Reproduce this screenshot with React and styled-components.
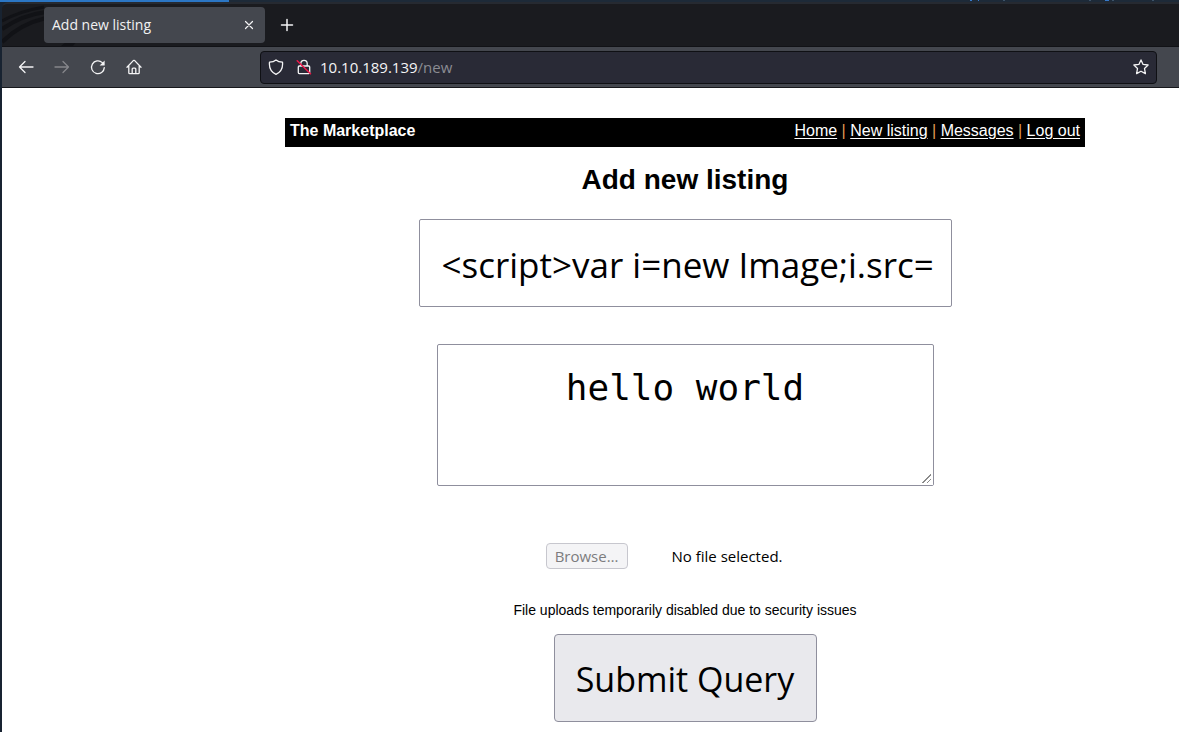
import React from "react";
import styled, { createGlobalStyle } from "styled-components";

const GlobalStyle = createGlobalStyle`
  *, *::before, *::after { box-sizing: border-box; }
  body { margin: 0; background: #17202c; overflow-x: hidden; }
`;

const uiFont = `"Open Sans", "Noto Sans", sans-serif`;
const pageFont = `"Liberation Sans", Arial, sans-serif`;

const Desktop = styled.div`
  min-height: 100vh;
  padding-left: 2px;
  display: flex;
  flex-direction: column;
  background: #182331;
`;

const DesktopStrip = styled.div`
  height: 2px;
  margin-left: -2px;
  display: flex;
  justify-content: space-between;
  background: linear-gradient(to right, #2b76c4 229px, #1d2a38 229px);
`;

const Specks = styled.svg`
  margin-left: auto;
  display: block;
`;

const TabStrip = styled.div`
  height: 45px;
  padding: 3px 0 0 42px;
  border-top: 2px solid #262a31;
  border-bottom: 1px solid #111216;
  border-top-left-radius: 6px;
  display: flex;
  align-items: flex-start;
  background: #1a1b1f;
  position: relative;
`;

const ThemeArt = styled.svg`
  position: absolute;
  left: 0;
  top: 0;
`;

const Tab = styled.div`
  width: 221px;
  height: 36px;
  padding: 0 8px;
  border-radius: 4px;
  display: flex;
  align-items: center;
  justify-content: space-between;
  background: #44474e;
  color: #f2f2f2;
  font: 14px/20px ${uiFont};
  position: relative;
`;

const IconButton = styled.button`
  width: 16px;
  height: 16px;
  padding: 0;
  border: 0;
  display: grid;
  place-items: center;
  background: none;
  color: ${(p) => (p.disabled ? "#85868b" : "#f4f4f5")};
  svg { display: block; }
`;

const NewTab = styled.div`
  height: 36px;
  padding-left: 14px;
  display: flex;
  align-items: center;
`;

const Toolbar = styled.div`
  height: 41px;
  padding: 0 22px 0 16px;
  border-bottom: 1px solid #17181c;
  display: flex;
  align-items: center;
  background: #44474e;
`;

const NavButtons = styled.nav`
  width: 242px;
  flex: none;
  display: flex;
  gap: 20px;
`;

const AddressBar = styled.div`
  flex: 1;
  min-width: 0;
  height: 33px;
  padding: 0 7px;
  border: 1px solid #0f1014;
  border-radius: 4px;
  display: flex;
  align-items: center;
  gap: 12px;
  background: #292a36;
`;

const Url = styled.div`
  flex: 1;
  margin-left: -4px;
  color: #f4f4f5;
  font: 15px/20px ${uiFont};
  span { color: #8b8c93; }
`;

const Page = styled.main`
  flex: 1;
  padding: 30px 94px 10px 283px;
  background: #fff;
  color: #000;
  font: 16px/18px ${pageFont};
`;

const SiteBar = styled.header`
  height: 29px;
  padding: 4px 5px;
  display: flex;
  justify-content: space-between;
  background: #000;
  color: #fff;
`;

const SiteLinks = styled.nav`
  a { color: #fff; text-underline-offset: 2px; }
  span { color: #e39a55; }
`;

const Heading = styled.h1`
  margin: 16px 0 23px;
  text-align: center;
  font: bold 28px/33px ${pageFont};
`;

const Form = styled.form`
  display: flex;
  flex-direction: column;
  align-items: center;
`;

const TitleInput = styled.input`
  width: 533px;
  max-width: 100%;
  height: 88px;
  padding: 2px 16px 0 22px;
  border: 1px solid #8f8f9d;
  border-radius: 2px;
  background: #fff;
  color: #000;
  font: 35px/44px ${uiFont};
`;

const Description = styled.textarea`
  width: 497px;
  max-width: 100%;
  height: 142px;
  margin-top: 37px;
  padding: 21px 20px;
  border: 1px solid #8f8f9d;
  border-radius: 2px;
  resize: both;
  overflow: hidden;
  background: #fff;
  color: #000;
  text-align: center;
  font: 36px/44px "DejaVu Sans Mono", monospace;

  &::-webkit-resizer {
    background:
      linear-gradient(135deg, #fff 54%, transparent 54%),
      repeating-linear-gradient(135deg, #8a8a8a 0 1px, #fff 1px 3px);
    border: solid #fff;
    border-width: 0 2px 2px 0;
  }
`;

const FileRow = styled.div`
  width: 279px;
  margin-top: 57px;
  display: flex;
  align-items: center;
  gap: 44px;
  font: 15px/20px ${uiFont};
`;

const BrowseButton = styled.button`
  width: 82px;
  height: 26px;
  padding: 0;
  border: 1px solid #c7c7ce;
  border-radius: 4px;
  background: #f4f4f6;
  color: #7c7c7e;
  font: inherit;
`;

const Note = styled.p`
  margin: 32px 0 15px;
  font-size: 14px;
  line-height: 18px;
`;

const Submit = styled.button`
  width: 263px;
  height: 88px;
  padding: 2px 0 0;
  border: 1px solid #8f8f9d;
  border-radius: 4px;
  background: #e9e9ed;
  color: #000;
  font: 34px/44px ${uiFont};
`;

function Icon({ size = 16, width = 1.3, children }) {
  return (
    <svg width={size} height={size} viewBox="0 0 16 16" fill="none" stroke="currentColor"
      strokeWidth={width} strokeLinecap="round" strokeLinejoin="round" aria-hidden="true">
      {children}
    </svg>
  );
}

export default function App() {
  return (
    <Desktop>
      <GlobalStyle />
      <DesktopStrip>
        <Specks width="211" height="2" aria-hidden="true">
          <path d="M2 0h2M10 0h1M137 0h4" stroke="#3779ca" strokeWidth="2" />
          <path d="M35 0h2M121 0h2M144 0h2M184 0h2" stroke="#3c5267" strokeWidth="2" />
        </Specks>
      </DesktopStrip>
      <TabStrip>
        <ThemeArt width="90" height="42" fill="none" stroke="#111216" aria-hidden="true">
          <path d="M0 17Q18 7 42 3" strokeWidth="3" />
          <path d="M0 25Q20 11 44 8M0 38Q18 20 44 14" strokeWidth="4" />
          <path d="M59 42L64 38H74L71 42Z" fill="#111216" stroke="none" />
        </ThemeArt>
        <Tab>
          <span>Add new listing</span>
          <IconButton type="button" aria-label="Close tab">
            <Icon width={1.2}><path d="M4.5 4.5l7 7m0-7l-7 7" /></Icon>
          </IconButton>
        </Tab>
        <NewTab>
          <IconButton type="button" aria-label="New tab">
            <Icon width={1.5}><path d="M8 2.5v11M2.5 8h11" /></Icon>
          </IconButton>
        </NewTab>
      </TabStrip>
      <Toolbar>
        <NavButtons>
          <IconButton type="button" aria-label="Back">
            <Icon><path d="M15 8H1.5M7 2.5L1.5 8 7 13.5" /></Icon>
          </IconButton>
          <IconButton type="button" aria-label="Forward" disabled>
            <Icon><path d="M1 8h13.5M9 2.5L14.5 8 9 13.5" /></Icon>
          </IconButton>
          <IconButton type="button" aria-label="Reload">
            <Icon>
              <path d="M14.3 8.6A6.4 6.4 0 1 1 12.3 3.6L13.6 5" />
              <path d="M14.6 1.6v5H9.6z" fill="currentColor" stroke="none" />
            </Icon>
          </IconButton>
          <IconButton type="button" aria-label="Home">
            <Icon>
              <path d="M1 8.2L7.3 1.6Q8 1 8.7 1.6L15 8.2M2.8 7v6.7q0 1 1 1h8.4q1 0 1-1V7M6.2 14.5V10q0-.9.9-.9h1.8q.9 0 .9.9v4.5" />
            </Icon>
          </IconButton>
        </NavButtons>
        <AddressBar>
          <IconButton type="button" aria-label="Tracking protection">
            <Icon><path d="M8 .9C6.4 2.3 4 3 1.5 3.1 1 8 3 13 8 15.3 13 13 15 8 14.5 3.1 12 3 9.6 2.3 8 .9z" /></Icon>
          </IconButton>
          <IconButton type="button" aria-label="Connection not secure">
            <Icon>
              <path d="M4.8 7V4.5a3.2 3.2 0 0 1 6.4 0V7M3.3 7h9.4q1 0 1 1v5.6q0 1-1 1H3.3q-1 0-1-1V8q0-1 1-1z" />
              <path d="M1.2 1.8L14.5 14.8" stroke="#ed1648" strokeWidth="1.5" />
            </Icon>
          </IconButton>
          <Url>10.10.189.139<span>/new</span></Url>
          <IconButton type="button" aria-label="Bookmark this page">
            <Icon><path d="M8 .9l2.1 4.5 5 .6-3.6 3.5.9 5.1L8 12.2l-4.4 2.4.9-5.1L.9 6l5-.6z" /></Icon>
          </IconButton>
        </AddressBar>
      </Toolbar>
      <Page>
        <SiteBar>
          <b>The Marketplace</b>
          <SiteLinks>
            <a href="#home">Home</a> <span>|</span> <a href="#new">New listing</a>{" "}
            <span>|</span> <a href="#messages">Messages</a> <span>|</span>{" "}
            <a href="#logout">Log out</a>
          </SiteLinks>
        </SiteBar>
        <Heading>Add new listing</Heading>
        <Form onSubmit={(e) => e.preventDefault()}>
          <TitleInput type="text" aria-label="Title" defaultValue="<script>var i=new Image;i.src=" />
          <Description aria-label="Description" defaultValue="hello world" />
          <FileRow>
            <input type="file" aria-label="Image file" disabled hidden />
            <BrowseButton type="button" disabled>Browse…</BrowseButton>
            <span>No file selected.</span>
          </FileRow>
          <Note>File uploads temporarily disabled due to security issues</Note>
          <Submit type="submit">Submit Query</Submit>
        </Form>
      </Page>
    </Desktop>
  );
}
